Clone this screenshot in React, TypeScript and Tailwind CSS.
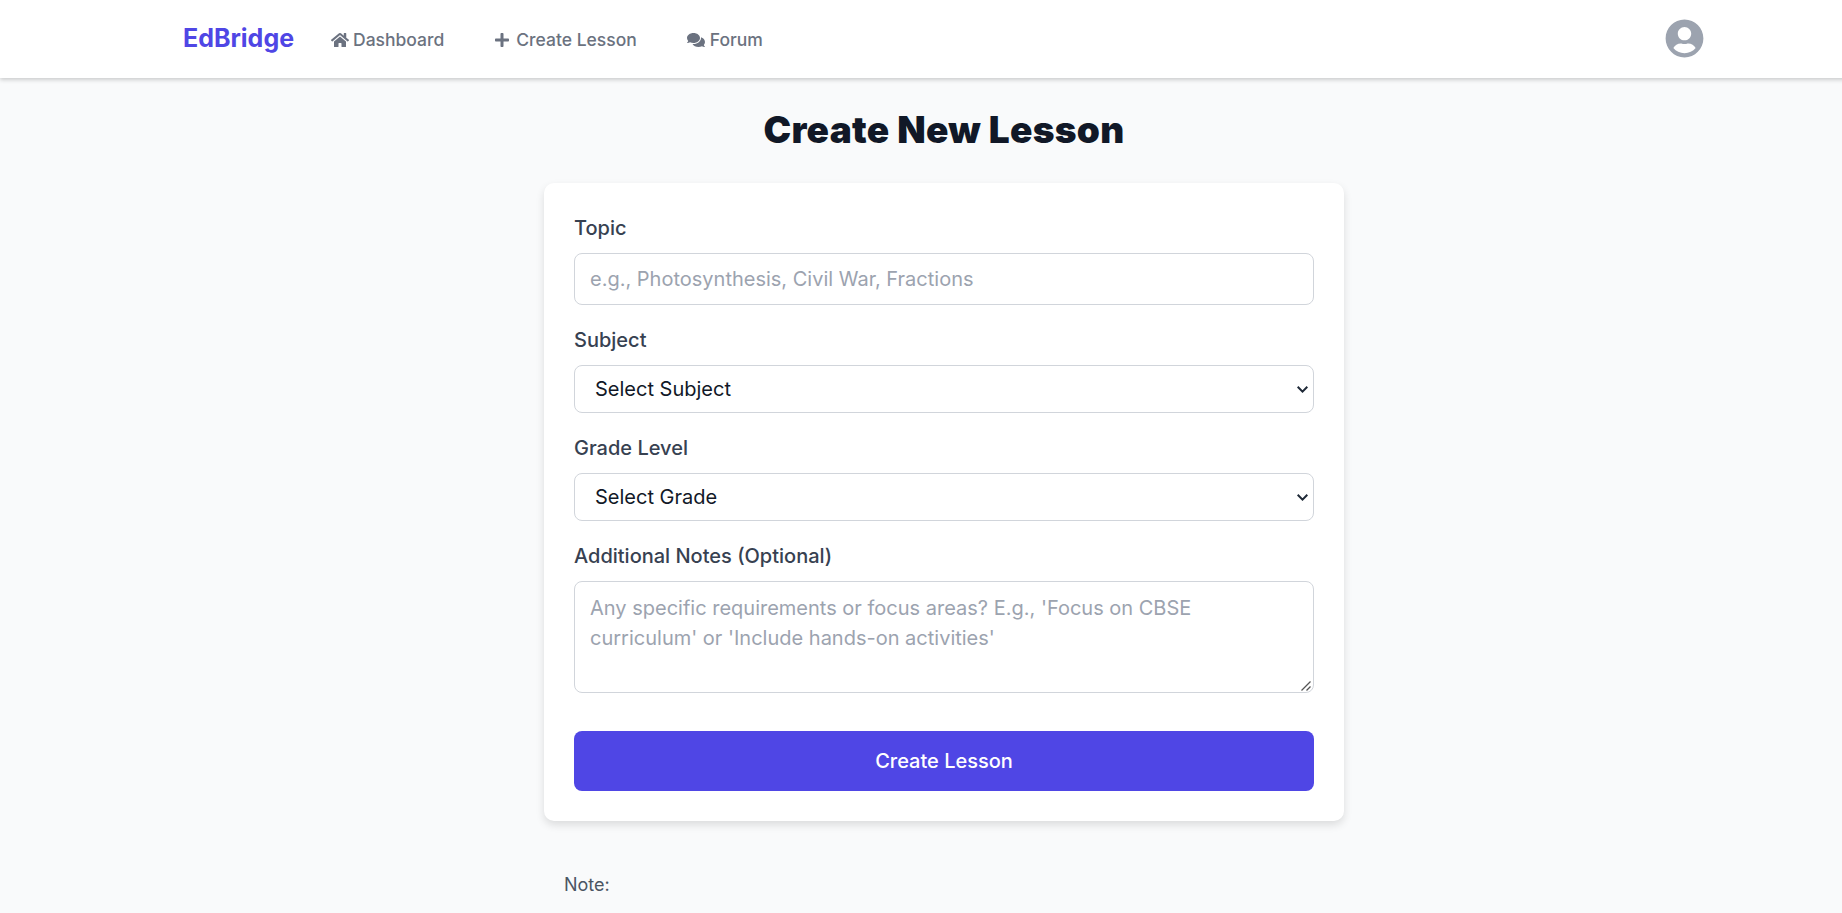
import { FaComments, FaHome, FaPlus, FaUserCircle } from 'react-icons/fa';

const NAV_LINKS = [
  { label: 'Dashboard', icon: <FaHome className="h-[18px] w-[18px]" />, gap: 'gap-[4px]' },
  { label: 'Create Lesson', icon: <FaPlus className="h-4 w-4" />, gap: 'gap-[6px]' },
  { label: 'Forum', icon: <FaComments className="h-[18px] w-[18px]" />, gap: 'gap-[5px]' },
];

function Field({ label, children }: { label: string; children: React.ReactNode }) {
  return (
    <div>
      <label className="mb-[11px] block pt-[1px] text-[20px] leading-[28px] font-[450] text-[#374151]">{label}</label>
      {children}
    </div>
  );
}

function SelectField({ label, option }: { label: string; option: string }) {
  return (
    <Field label={label}>
      <div className="relative">
        <select className="h-[48px] w-full appearance-none rounded-[8px] border border-[#d1d5db] bg-white pl-[20px] text-[20px] text-[#111827]">
          <option>{option}</option>
        </select>
        <svg viewBox="0 0 11 7" className="pointer-events-none absolute top-[21px] right-[6px] h-[7px] w-[11px]" fill="none" stroke="#1f2937" strokeWidth="2">
          <path d="M0.7 0.8 L5.5 5.6 L10.3 0.8" />
        </svg>
      </div>
    </Field>
  );
}

export default function App() {
  return (
    <div className="h-screen overflow-hidden bg-[#f9fafb] font-['Inter',sans-serif]">
      {/* the page in the reference is a bit wider than the window, so it centres at 944 */}
      <div className="w-[1888px]">
        <nav className="relative h-[78px] bg-white shadow-[0_2px_4px_rgba(0,0,0,0.18)]">
          <div className="mx-auto flex h-full w-[1552px] items-center justify-between px-[16px]">
            <div className="flex items-center">
              <span className="-ml-[1px] w-[110px] text-[25px] font-bold text-[#4f46e5]">EdBridge</span>
              <div className="mt-[2px] ml-[38px] flex items-center gap-[50px]">
                {NAV_LINKS.map((link) => (
                  <a key={link.label} className={`flex items-center text-[17.5px] font-[450] text-[#6b7280] ${link.gap}`}>
                    {link.icon}
                    {link.label}
                  </a>
                ))}
              </div>
            </div>
            <FaUserCircle className="mb-[2px] h-[39px] w-[39px] text-[#9ca3af]" />
          </div>
        </nav>

        <main className="flex flex-col items-center">
          <h1 className="mt-[26px] text-[37px] leading-[52px] font-black tracking-[0.3px] text-[#111827]">Create New Lesson</h1>
          <form className="mt-[27px] flex w-[800px] flex-col gap-[20px] rounded-[10px] bg-white p-[30px] shadow-[0_4px_8px_rgba(0,0,0,0.12)]">
            <Field label="Topic">
              <input
                placeholder="e.g., Photosynthesis, Civil War, Fractions"
                className="h-[52px] w-full rounded-[8px] border border-[#d1d5db] px-[15px] text-[20px] placeholder:text-[#9ca3af]"
              />
            </Field>
            <SelectField label="Subject" option="Select Subject" />
            <SelectField label="Grade Level" option="Select Grade" />
            <Field label="Additional Notes (Optional)">
              <div className="relative">
                <textarea
                  placeholder="Any specific requirements or focus areas? E.g., 'Focus on CBSE curriculum' or 'Include hands-on activities'"
                  className="block h-[112px] w-full resize-none rounded-[8px] border border-[#d1d5db] px-[15px] py-[11px] text-[20px] leading-[30px] placeholder:text-[#9ca3af]"
                />
                {/* resize grip */}
                <svg viewBox="0 0 10 10" className="pointer-events-none absolute right-[3px] bottom-[2px] h-[10px] w-[10px]" fill="none" stroke="#555555" strokeWidth="1.2">
                  <path d="M0.5 9.5 L9.5 0.5" />
                  <path d="M5.5 9.5 L9.5 5.5" />
                </svg>
              </div>
            </Field>
            <button type="button" className="mt-[18px] h-[60px] w-full rounded-[8px] bg-[#4f46e5] text-[20px] font-medium text-white">
              Create Lesson
            </button>
          </form>
          <div className="mt-[52px] w-[760px] text-[18px] text-[#4b5563]">
            <p className="leading-[24px]">Note:</p>
            <p className="mt-[12px] leading-[24px]">Lessons are generated to match your selected subject and grade level.</p>
          </div>
        </main>
      </div>
    </div>
  );
}
